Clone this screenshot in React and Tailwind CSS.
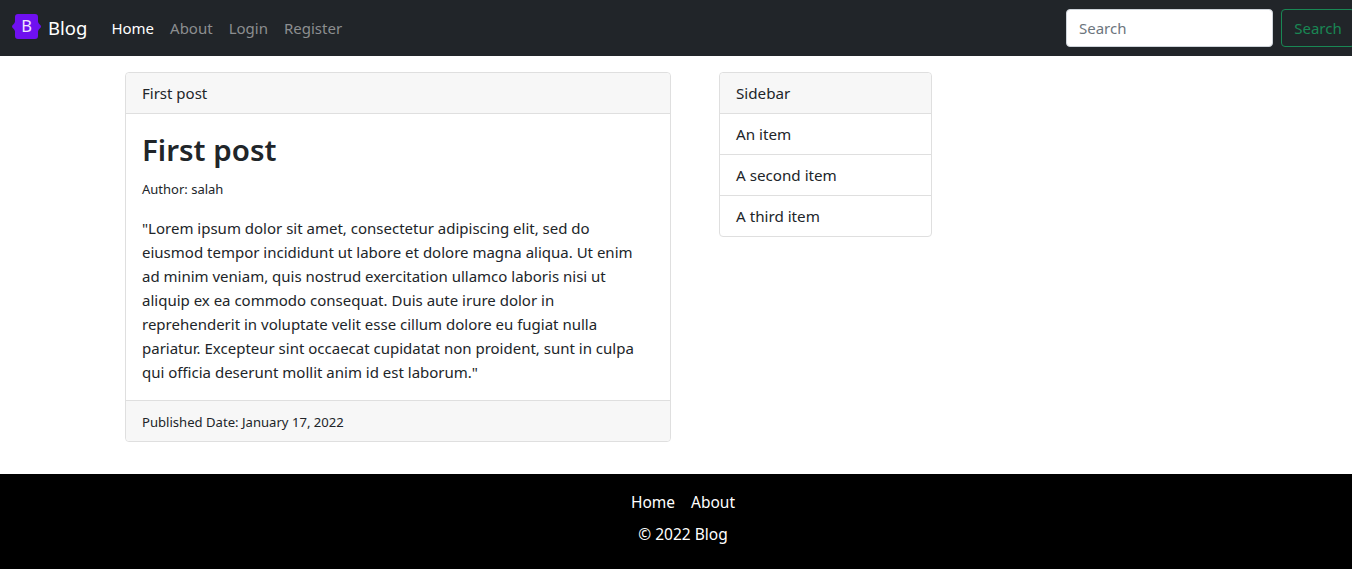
import React from 'react';

const Logo = () => (
  <svg width="29" height="25" viewBox="0 0 29 25" className="shrink-0 -mt-[3px]">
    <path d="M6 0h17a3 3 0 0 1 3 3v4.500c0 2 3 3.500 3 5s-3 3-3 5V22a3 3 0 0 1-3 3H6a3 3 0 0 1-3-3v-4.500c0-2-3-3.500-3-5s3-3 3-5V3a3 3 0 0 1 3-3z" fill="#6f10f0" />
    <text x="14.500" y="17.500" textAnchor="middle" fontSize="16.500" fill="#f0e6ff" fontFamily="Noto Sans, sans-serif">B</text>
  </svg>
);

const App = () => {
  const font = { fontFamily: '"Noto Sans", sans-serif' };
  return (
    <div style={font} className="min-h-[569px] flex flex-col bg-white text-[#212529] text-[15px] overflow-hidden">
      {/* Navbar */}
      <nav className="h-14 bg-[#212529] flex items-center pl-3 shrink-0 overflow-hidden">
        <a className="flex items-center gap-[7px] text-white text-[18.500px] mr-[24px]">
          <Logo />
          <span>Blog</span>
        </a>
        <div className="flex gap-4 text-[15px] text-[#8c8e90]">
          <a className="text-white">Home</a>
          <a>About</a>
          <a>Login</a>
          <a>Register</a>
        </div>
        <div className="ml-auto flex gap-2 shrink-0">
          <input
            placeholder="Search"
            className="w-[207px] h-[38px] rounded-[4px] bg-white border border-[#ced4da] px-3 text-[15px] placeholder:text-[#6c757d]"
          />
          <button className="w-[74px] h-[38px] shrink-0 rounded-[4px] border border-[#198754] text-[#198754] text-[15px] -mr-[3px]">
            Search
          </button>
        </div>
      </nav>

      {/* Content */}
      <main className="flex items-start gap-12 pl-[125px] pt-4 pb-8">
        <div className="w-[546px] border border-[#dfdfdf] rounded-[4px]">
          <div className="h-[41px] px-4 flex items-center bg-[#f7f7f7] border-b border-[#dfdfdf] rounded-t-[4px]">First post</div>
          <div className="p-4">
            <h1 className="text-[29.500px] leading-[40px] font-semibold mb-[9px]">First post</h1>
            <p className="text-[13px] leading-[20px] mb-[17px]">Author: salah</p>
            <p className="leading-6">
              "Lorem ipsum dolor sit amet, consectetur adipiscing elit, sed do<br />
              eiusmod tempor incididunt ut labore et dolore magna aliqua. Ut enim<br />
              ad minim veniam, quis nostrud exercitation ullamco laboris nisi ut<br />
              aliquip ex ea commodo consequat. Duis aute irure dolor in<br />
              reprehenderit in voluptate velit esse cillum dolore eu fugiat nulla<br />
              pariatur. Excepteur sint occaecat cupidatat non proident, sunt in culpa<br />
              qui officia deserunt mollit anim id est laborum."
            </p>
          </div>
          <div className="h-[41px] px-4 pt-[3px] flex items-center bg-[#f7f7f7] border-t border-[#dfdfdf] rounded-b-[4px] text-[13.100px]">
            Published Date: January 17, 2022
          </div>
        </div>

        <div className="w-[213px] border border-[#dfdfdf] rounded-[4px] text-[15.200px]">
          <div className="h-[41px] px-4 flex items-center bg-[#f7f7f7] border-b border-[#dfdfdf] rounded-t-[4px]">Sidebar</div>
          <div className="h-[41px] px-4 flex items-center border-b border-[#dfdfdf]">An item</div>
          <div className="h-[41px] px-4 flex items-center border-b border-[#dfdfdf]">A second item</div>
          <div className="h-10 px-4 flex items-center">A third item</div>
        </div>
      </main>

      {/* Footer */}
      <footer className="h-[95px] bg-black text-white text-[15.500px] flex flex-col items-center pl-[14px]">
        <div className="flex gap-4 mt-4 leading-6">
          <a>Home</a>
          <a>About</a>
        </div>
        <p className="mt-2 leading-6">© 2022 Blog</p>
      </footer>
    </div>
  );
};

export default App;
